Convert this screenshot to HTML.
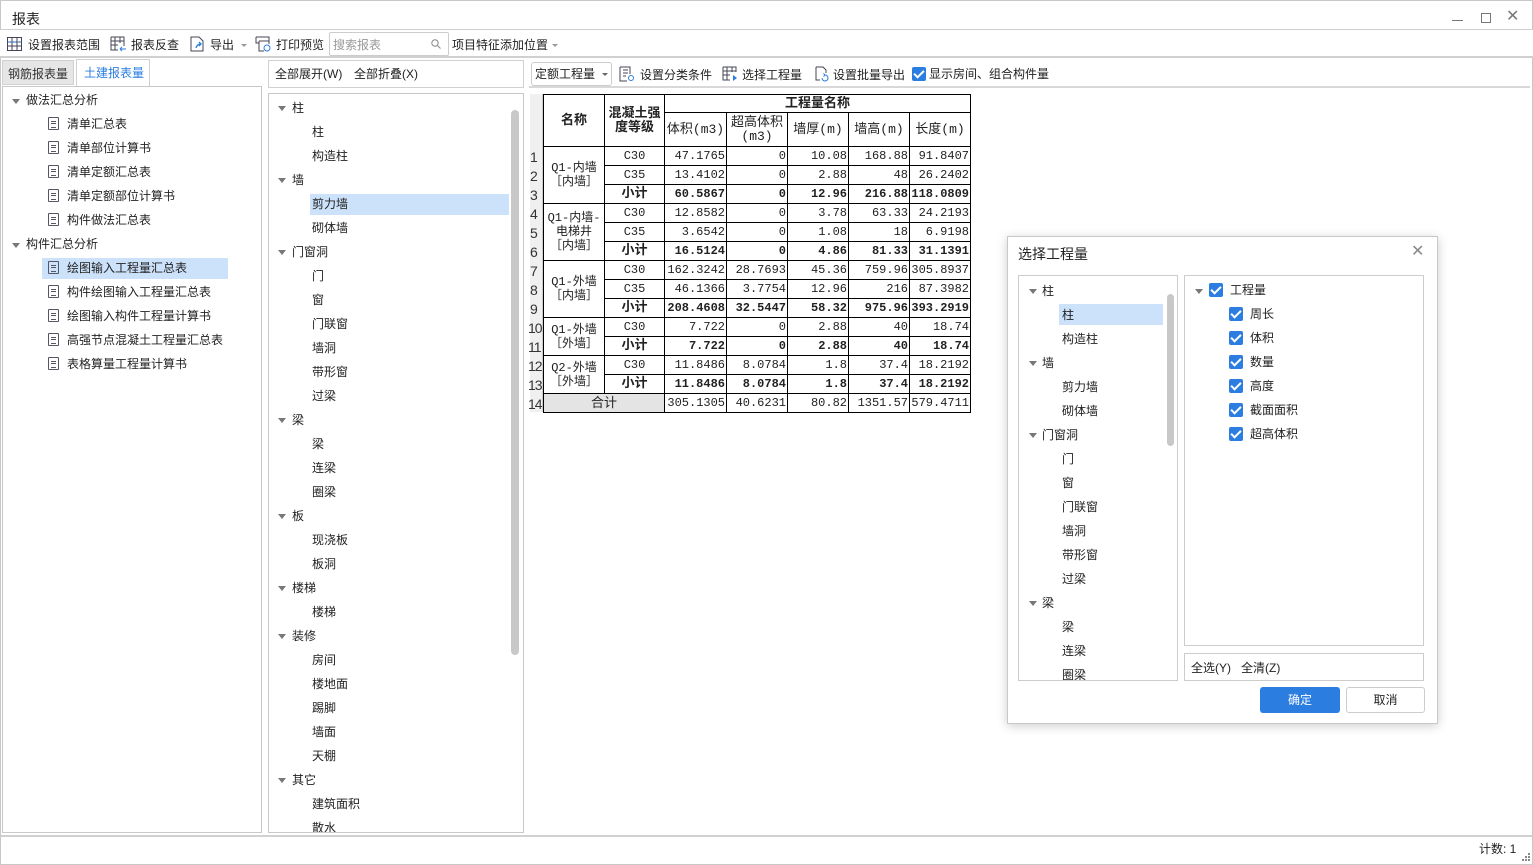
<!DOCTYPE html>
<html><head><meta charset="utf-8"><style>
*{margin:0;padding:0;box-sizing:border-box}
body{width:1533px;height:865px;overflow:hidden;background:#f0f0f0;font-family:"Liberation Sans","Noto Sans CJK SC",sans-serif;font-size:12px;color:#222;position:relative}
.a{position:absolute;white-space:nowrap}
.t{position:absolute;white-space:nowrap;line-height:16px}
.tri{position:absolute;width:0;height:0;border-left:4px solid transparent;border-right:4px solid transparent;border-top:5px solid #777}
.doc{position:absolute;width:11px;height:13px;border:1.3px solid #556;border-radius:1px}
.doc:before{content:"";position:absolute;left:2px;right:2px;top:3px;height:5px;border-top:1px solid #556;border-bottom:1px solid #556}
.doc:after{content:"";position:absolute;left:2px;right:2px;top:5px;border-top:1px solid #556}
table{border-collapse:collapse;table-layout:fixed;position:absolute;left:543px;top:94px;font-family:"Liberation Mono","Noto Sans CJK SC",monospace;font-size:12px;background:#fff}
td{border:1px solid #000;height:19px;padding:0 1px;text-align:right;overflow:hidden;white-space:nowrap;line-height:12px}
td.c{text-align:center}
.b td{font-weight:bold}
td.n{text-align:center;white-space:normal;font-weight:normal!important;line-height:14px;padding:0 2px;font-size:12px}
.rn{position:absolute;left:530px;width:13px;height:19px;font-size:14px;color:#333;text-align:left;line-height:22px;font-family:"Liberation Sans",sans-serif}
.cb{position:absolute;width:14px;height:14px;background:#2b7de0;border-radius:2px}
.cb:after{content:"";position:absolute;left:4px;top:1px;width:4px;height:8px;border-right:2px solid #fff;border-bottom:2px solid #fff;transform:rotate(45deg)}
</style></head><body>
<div class="a" style="left:0;top:0;width:1533px;height:865px;border:1px solid #c8c8c8;background:#fff"></div>
<div class="t" style="left:12px;top:11px;font-size:14px">报表</div>
<div class="a" style="left:1452px;top:20px;width:11px;border-top:1px solid #777"></div>
<div class="a" style="left:1481px;top:13px;width:10px;height:10px;border:1px solid #777"></div>
<div class="t" style="left:1506px;top:9px;font-size:16px;color:#777">✕</div>
<div class="a" style="left:0;top:29px;width:1533px;border-top:1px solid #cfcfcf"></div>
<div class="a" style="left:0;top:30px;width:1533px;height:28px;background:#fff;border-bottom:2px solid #d0d0d0"></div>
<svg class="a" style="left:7px;top:37px" width="15" height="14"><rect x="0.5" y="0.5" width="14" height="13" fill="none" stroke="#445"/><path d="M5 1v12M10 1v12M1 5h13M1 9h13" stroke="#445"/><path d="M1 5h13" stroke="#2b7de0" stroke-dasharray="2 1"/></svg>
<div class="t" style="left:28px;top:37px">设置报表范围</div>
<svg class="a" style="left:110px;top:36px" width="17" height="16"><path d="M1 1h13v9M1 1v13h7M5 1v13M10 1v6M1 5h13M1 9h7" fill="none" stroke="#445"/><path d="M10 13h6M10 13l2-2M10 13l2 2" stroke="#2b7de0" fill="none"/></svg>
<div class="t" style="left:131px;top:37px">报表反查</div>
<svg class="a" style="left:190px;top:36px" width="15" height="16"><path d="M1 1h8l4 4v10H1z" fill="none" stroke="#445"/><path d="M6 12q1-4 5-4M9 6l2 2-2 2" stroke="#2b7de0" fill="none" stroke-width="1.3"/></svg>
<div class="t" style="left:210px;top:37px">导出</div>
<div class="tri" style="left:241px;top:44px;border-width:3px 3px 0;border-top-color:#999"></div>
<svg class="a" style="left:255px;top:36px" width="17" height="16"><path d="M1 1h13v4M1 1v6h3M4 5h10v3M4 5v10h5" fill="none" stroke="#445"/><circle cx="12" cy="12" r="3" fill="none" stroke="#2b7de0"/></svg>
<div class="t" style="left:276px;top:37px">打印预览</div>
<div class="a" style="left:329px;top:32px;width:120px;height:24px;border:1px solid #ccc;border-radius:2px;background:#fff"></div>
<div class="t" style="left:333px;top:37px;color:#999">搜索报表</div>
<svg class="a" style="left:431px;top:39px" width="10" height="10"><circle cx="4" cy="4" r="3.2" fill="none" stroke="#888"/><path d="M6.5 6.5l3 3" stroke="#888"/></svg>
<div class="t" style="left:452px;top:37px">项目特征添加位置</div>
<div class="tri" style="left:552px;top:44px;border-width:3px 3px 0;border-top-color:#999"></div>
<div class="a" style="left:2px;top:60px;width:72px;height:25px;background:#e6e6e6;border:1px solid #d0d0d0"></div>
<div class="t" style="left:8px;top:66px;color:#333">钢筋报表量</div>
<div class="a" style="left:76px;top:59px;width:74px;height:28px;background:#fff;border:1px solid #d0d0d0;border-bottom:none"></div>
<div class="t" style="left:84px;top:65px;color:#2b7de0">土建报表量</div>
<div class="a" style="left:2px;top:86px;width:260px;height:747px;background:#fff;border:1px solid #c8c8c8"></div>
<div class="tri" style="left:12px;top:99px"></div><div class="t" style="left:26px;top:92px">做法汇总分析</div>
<div class="doc" style="left:48px;top:117px"></div><div class="t" style="left:67px;top:116px">清单汇总表</div>
<div class="doc" style="left:48px;top:141px"></div><div class="t" style="left:67px;top:140px">清单部位计算书</div>
<div class="doc" style="left:48px;top:165px"></div><div class="t" style="left:67px;top:164px">清单定额汇总表</div>
<div class="doc" style="left:48px;top:189px"></div><div class="t" style="left:67px;top:188px">清单定额部位计算书</div>
<div class="doc" style="left:48px;top:213px"></div><div class="t" style="left:67px;top:212px">构件做法汇总表</div>
<div class="tri" style="left:12px;top:243px"></div><div class="t" style="left:26px;top:236px">构件汇总分析</div>
<div class="a" style="left:42px;top:258px;width:186px;height:21px;background:#cce1fa"></div>
<div class="doc" style="left:48px;top:261px"></div><div class="t" style="left:67px;top:260px">绘图输入工程量汇总表</div>
<div class="doc" style="left:48px;top:285px"></div><div class="t" style="left:67px;top:284px">构件绘图输入工程量汇总表</div>
<div class="doc" style="left:48px;top:309px"></div><div class="t" style="left:67px;top:308px">绘图输入构件工程量计算书</div>
<div class="doc" style="left:48px;top:333px"></div><div class="t" style="left:67px;top:332px">高强节点混凝土工程量汇总表</div>
<div class="doc" style="left:48px;top:357px"></div><div class="t" style="left:67px;top:356px">表格算量工程量计算书</div>
<div class="a" style="left:268px;top:60px;width:256px;height:28px;background:#fff;border:1px solid #d0d0d0"></div>
<div class="t" style="left:275px;top:66px">全部展开(W)</div><div class="t" style="left:354px;top:66px">全部折叠(X)</div>
<div class="a" style="left:268px;top:93px;width:256px;height:740px;background:#fff;border:1px solid #c8c8c8"></div>
<div class="a" style="left:511px;top:110px;width:8px;height:545px;background:#c8c8c8;border-radius:4px"></div>
<div class="a" style="left:310px;top:194px;width:199px;height:21px;background:#cce1fa"></div>
<div class="tri" style="left:278px;top:106px"></div><div class="t" style="left:292px;top:100px">柱</div>
<div class="t" style="left:312px;top:124px">柱</div><div class="t" style="left:312px;top:148px">构造柱</div>
<div class="tri" style="left:278px;top:178px"></div><div class="t" style="left:292px;top:172px">墙</div>
<div class="t" style="left:312px;top:196px">剪力墙</div><div class="t" style="left:312px;top:220px">砌体墙</div>
<div class="tri" style="left:278px;top:250px"></div><div class="t" style="left:292px;top:244px">门窗洞</div>
<div class="t" style="left:312px;top:268px">门</div><div class="t" style="left:312px;top:292px">窗</div><div class="t" style="left:312px;top:316px">门联窗</div><div class="t" style="left:312px;top:340px">墙洞</div><div class="t" style="left:312px;top:364px">带形窗</div><div class="t" style="left:312px;top:388px">过梁</div>
<div class="tri" style="left:278px;top:418px"></div><div class="t" style="left:292px;top:412px">梁</div>
<div class="t" style="left:312px;top:436px">梁</div><div class="t" style="left:312px;top:460px">连梁</div><div class="t" style="left:312px;top:484px">圈梁</div>
<div class="tri" style="left:278px;top:514px"></div><div class="t" style="left:292px;top:508px">板</div>
<div class="t" style="left:312px;top:532px">现浇板</div><div class="t" style="left:312px;top:556px">板洞</div>
<div class="tri" style="left:278px;top:586px"></div><div class="t" style="left:292px;top:580px">楼梯</div>
<div class="t" style="left:312px;top:604px">楼梯</div>
<div class="tri" style="left:278px;top:634px"></div><div class="t" style="left:292px;top:628px">装修</div>
<div class="t" style="left:312px;top:652px">房间</div><div class="t" style="left:312px;top:676px">楼地面</div><div class="t" style="left:312px;top:700px">踢脚</div><div class="t" style="left:312px;top:724px">墙面</div><div class="t" style="left:312px;top:748px">天棚</div>
<div class="tri" style="left:278px;top:778px"></div><div class="t" style="left:292px;top:772px">其它</div>
<div class="t" style="left:312px;top:796px">建筑面积</div>
<div class="a" style="left:269px;top:816px;width:240px;height:16px;overflow:hidden"><div class="t" style="left:43px;top:4px">散水</div></div>
<div class="a" style="left:529px;top:60px;width:1001px;height:28px;background:#fff;border-bottom:2px solid #d8d8d8"></div>
<div class="a" style="left:531px;top:62px;width:81px;height:24px;border:1px solid #ccc;border-radius:3px;background:#fff"></div>
<div class="t" style="left:535px;top:66px">定额工程量</div>
<div class="tri" style="left:602px;top:73px;border-width:3px 3px 0;border-top-color:#666"></div>
<svg class="a" style="left:619px;top:66px" width="16" height="16"><path d="M1 1h10v7M1 1v14h7M4 4h5M4 7h5M4 10h3" fill="none" stroke="#445"/><circle cx="12" cy="12" r="2.5" fill="none" stroke="#2b7de0"/></svg>
<div class="t" style="left:640px;top:67px">设置分类条件</div>
<svg class="a" style="left:722px;top:66px" width="16" height="16"><path d="M1 1h13v5M1 1v13h7M5 1v13M10 1v5M1 5h13M1 9h7" fill="none" stroke="#445"/><path d="M11 9l4 3-4 3z" fill="#2b7de0"/></svg>
<div class="t" style="left:742px;top:67px">选择工程量</div>
<svg class="a" style="left:813px;top:66px" width="16" height="16"><path d="M3 1h7l3 3v3M3 1v13h4" fill="none" stroke="#445"/><path d="M9 12a3 3 0 1 0 3-3M12 9l-1.5-1.5M12 9l-1.5 1.5" fill="none" stroke="#2b7de0"/></svg>
<div class="t" style="left:833px;top:67px">设置批量导出</div>
<div class="cb" style="left:912px;top:67px"></div>
<div class="t" style="left:929px;top:66px">显示房间、组合构件量</div>
<div class="a" style="left:529px;top:90px;width:1001px;height:743px;background:#fff"></div>
<div class="a" style="left:530px;top:94px;width:13px;height:318px;background:#f0f0f0;border-right:1px solid #ccc"></div>
<div class="rn" style="top:146px">1</div><div class="rn" style="top:165px">2</div><div class="rn" style="top:184px">3</div><div class="rn" style="top:203px">4</div><div class="rn" style="top:222px">5</div><div class="rn" style="top:241px">6</div><div class="rn" style="top:260px">7</div><div class="rn" style="top:279px">8</div><div class="rn" style="top:298px">9</div><div class="rn" style="top:317px;left:528px;letter-spacing:-1px">10</div><div class="rn" style="top:336px;left:528px;letter-spacing:-1px">11</div><div class="rn" style="top:355px;left:528px;letter-spacing:-1px">12</div><div class="rn" style="top:374px;left:528px;letter-spacing:-1px">13</div><div class="rn" style="top:393px;left:528px;letter-spacing:-1px">14</div>
<table>
<colgroup><col style="width:61px"><col style="width:60px"><col style="width:62px"><col style="width:61px"><col style="width:61px"><col style="width:61px"><col style="width:61px"></colgroup>
<tr><td rowspan="2" class="c" style="font-weight:bold;font-size:13px">名称</td><td rowspan="2" class="c" style="font-weight:bold;font-size:13px;white-space:normal;line-height:14px">混凝土强度等级</td><td colspan="5" class="c" style="font-weight:bold;font-size:13px;height:18px">工程量名称</td></tr>
<tr style="height:34px"><td class="c" style="font-size:13px">体积(m3)</td><td class="c" style="white-space:normal;line-height:14px;font-size:13px">超高体积(m3)</td><td class="c" style="font-size:13px">墙厚(m)</td><td class="c" style="font-size:13px">墙高(m)</td><td class="c" style="font-size:13px">长度(m)</td></tr>
<tr><td rowspan="3" class="n">Q1-内墙［内墙］</td><td class="c">C30</td><td>47.1765</td><td>0</td><td>10.08</td><td>168.88</td><td>91.8407</td></tr>
<tr><td class="c">C35</td><td>13.4102</td><td>0</td><td>2.88</td><td>48</td><td>26.2402</td></tr>
<tr class="b"><td class="c" style="font-size:13px">小计</td><td>60.5867</td><td>0</td><td>12.96</td><td>216.88</td><td>118.0809</td></tr>
<tr><td rowspan="3" class="n">Q1-内墙-电梯井［内墙］</td><td class="c">C30</td><td>12.8582</td><td>0</td><td>3.78</td><td>63.33</td><td>24.2193</td></tr>
<tr><td class="c">C35</td><td>3.6542</td><td>0</td><td>1.08</td><td>18</td><td>6.9198</td></tr>
<tr class="b"><td class="c" style="font-size:13px">小计</td><td>16.5124</td><td>0</td><td>4.86</td><td>81.33</td><td>31.1391</td></tr>
<tr><td rowspan="3" class="n">Q1-外墙［内墙］</td><td class="c">C30</td><td>162.3242</td><td>28.7693</td><td>45.36</td><td>759.96</td><td>305.8937</td></tr>
<tr><td class="c">C35</td><td>46.1366</td><td>3.7754</td><td>12.96</td><td>216</td><td>87.3982</td></tr>
<tr class="b"><td class="c" style="font-size:13px">小计</td><td>208.4608</td><td>32.5447</td><td>58.32</td><td>975.96</td><td>393.2919</td></tr>
<tr><td rowspan="2" class="n">Q1-外墙［外墙］</td><td class="c">C30</td><td>7.722</td><td>0</td><td>2.88</td><td>40</td><td>18.74</td></tr>
<tr class="b"><td class="c" style="font-size:13px">小计</td><td>7.722</td><td>0</td><td>2.88</td><td>40</td><td>18.74</td></tr>
<tr><td rowspan="2" class="n">Q2-外墙［外墙］</td><td class="c">C30</td><td>11.8486</td><td>8.0784</td><td>1.8</td><td>37.4</td><td>18.2192</td></tr>
<tr class="b"><td class="c" style="font-size:13px">小计</td><td>11.8486</td><td>8.0784</td><td>1.8</td><td>37.4</td><td>18.2192</td></tr>
<tr style="background:#e4e4e4"><td colspan="2" class="c" style="font-size:13px;font-family:'Liberation Sans','Noto Sans CJK SC',sans-serif">合计</td><td style="background:#fff">305.1305</td><td style="background:#fff">40.6231</td><td style="background:#fff">80.82</td><td style="background:#fff">1351.57</td><td style="background:#fff">579.4711</td></tr>
</table>
<div class="a" style="left:1007px;top:236px;width:431px;height:488px;background:#fff;border:1px solid #c8c8c8;box-shadow:0 2px 10px rgba(0,0,0,.2)"></div>
<div class="t" style="left:1018px;top:246px;font-size:14px">选择工程量</div>
<div class="t" style="left:1411px;top:244px;font-size:16px;color:#888">✕</div>
<div class="a" style="left:1018px;top:275px;width:160px;height:406px;border:1px solid #ccc;overflow:hidden">
<div class="a" style="left:148px;top:18px;width:7px;height:152px;background:#c8c8c8;border-radius:4px"></div>
<div class="a" style="left:40px;top:28px;width:104px;height:21px;background:#cce1fa"></div>
<div class="tri" style="left:10px;top:13px"></div><div class="t" style="left:23px;top:7px">柱</div>
<div class="t" style="left:43px;top:31px">柱</div><div class="t" style="left:43px;top:55px">构造柱</div>
<div class="tri" style="left:10px;top:85px"></div><div class="t" style="left:23px;top:79px">墙</div>
<div class="t" style="left:43px;top:103px">剪力墙</div><div class="t" style="left:43px;top:127px">砌体墙</div>
<div class="tri" style="left:10px;top:157px"></div><div class="t" style="left:23px;top:151px">门窗洞</div>
<div class="t" style="left:43px;top:175px">门</div><div class="t" style="left:43px;top:199px">窗</div><div class="t" style="left:43px;top:223px">门联窗</div><div class="t" style="left:43px;top:247px">墙洞</div><div class="t" style="left:43px;top:271px">带形窗</div><div class="t" style="left:43px;top:295px">过梁</div>
<div class="tri" style="left:10px;top:325px"></div><div class="t" style="left:23px;top:319px">梁</div>
<div class="t" style="left:43px;top:343px">梁</div><div class="t" style="left:43px;top:367px">连梁</div><div class="t" style="left:43px;top:391px">圈梁</div>
</div>
<div class="a" style="left:1184px;top:275px;width:240px;height:371px;border:1px solid #ccc">
<div class="tri" style="left:10px;top:13px"></div><div class="cb" style="left:24px;top:7px"></div><div class="t" style="left:45px;top:6px">工程量</div>
<div class="cb" style="left:44px;top:31px"></div><div class="t" style="left:65px;top:30px">周长</div>
<div class="cb" style="left:44px;top:55px"></div><div class="t" style="left:65px;top:54px">体积</div>
<div class="cb" style="left:44px;top:79px"></div><div class="t" style="left:65px;top:78px">数量</div>
<div class="cb" style="left:44px;top:103px"></div><div class="t" style="left:65px;top:102px">高度</div>
<div class="cb" style="left:44px;top:127px"></div><div class="t" style="left:65px;top:126px">截面面积</div>
<div class="cb" style="left:44px;top:151px"></div><div class="t" style="left:65px;top:150px">超高体积</div>
</div>
<div class="a" style="left:1184px;top:653px;width:240px;height:28px;border:1px solid #ccc"></div>
<div class="t" style="left:1191px;top:660px">全选(Y)</div><div class="t" style="left:1241px;top:660px">全清(Z)</div>
<div class="a" style="left:1260px;top:687px;width:80px;height:26px;background:#2b7de0;border-radius:3px;color:#fff;text-align:center;line-height:26px">确定</div>
<div class="a" style="left:1346px;top:687px;width:79px;height:26px;background:#fff;border:1px solid #ccc;border-radius:3px;text-align:center;line-height:24px">取消</div>
<div class="a" style="left:1px;top:835px;width:1531px;border-top:2px solid #d0d0d0"></div>
<div class="a" style="left:1px;top:837px;width:1531px;height:27px;background:#fff"></div>
<div class="t" style="left:1479px;top:841px">计数: 1</div>
<svg class="a" style="left:1522px;top:853px" width="8" height="8"><g fill="#888"><rect x="6" y="0" width="2" height="2"/><rect x="3" y="3" width="2" height="2"/><rect x="6" y="3" width="2" height="2"/><rect x="0" y="6" width="2" height="2"/><rect x="3" y="6" width="2" height="2"/><rect x="6" y="6" width="2" height="2"/></g></svg>
</body></html>
